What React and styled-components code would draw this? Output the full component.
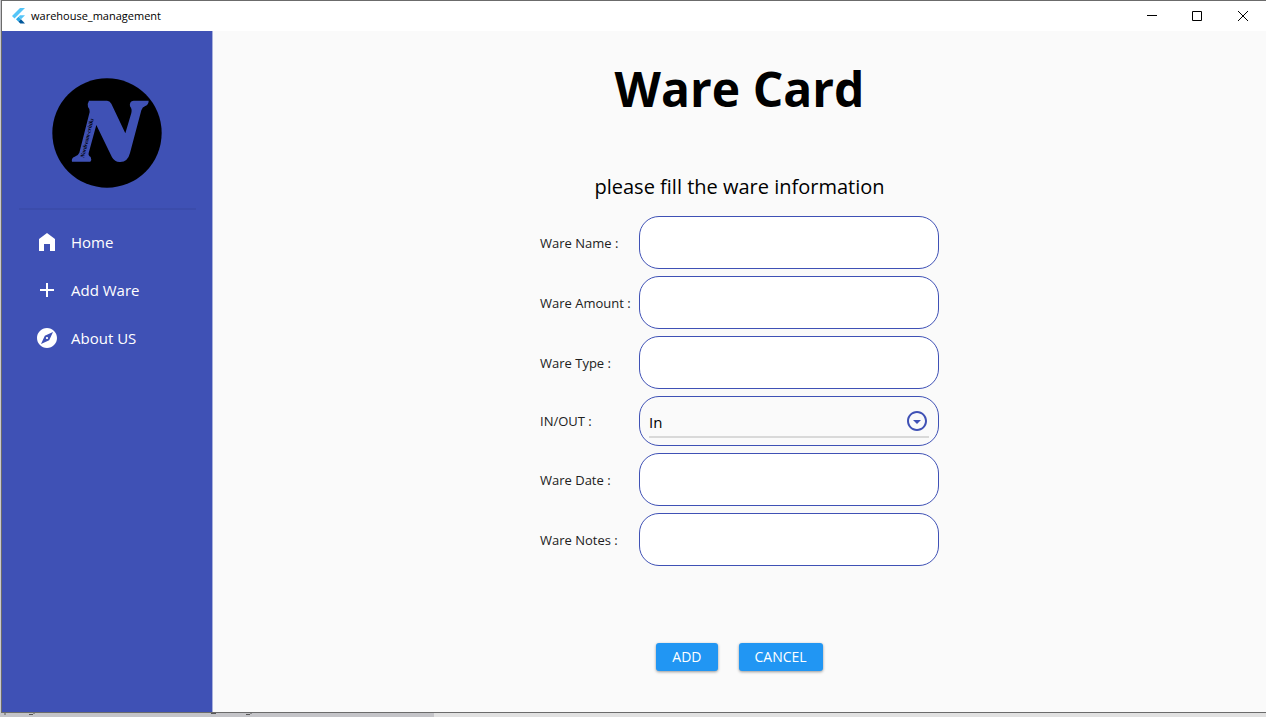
import React from "react";
import styled, { createGlobalStyle } from "styled-components";

const Global = createGlobalStyle`
  * { box-sizing: border-box; }
  body { margin: 0; }
  body, button, input, select { font-family: "Open Sans", "Noto Sans", sans-serif; }
`;

const indigo = "#3f51b5";

const Desktop = styled.div`
  min-height: 100vh;
  display: flex;
  flex-direction: column;
  background: #c9c9cd;
`;

const Window = styled.div`
  flex: 1;
  display: flex;
  flex-direction: column;
  border: solid #6b6b6b;
  border-width: 1px 0 1px 1px;
  margin-left: 1px;
  background: #fafafa;
`;

const TitleBar = styled.header`
  height: 30px;
  display: flex;
  align-items: center;
  padding: 0 0 0 8px;
  background: #fff;
`;

const AppTitle = styled.span`
  flex: 1;
  margin-left: 5px;
  font-size: 11px;
  line-height: 16px;
  color: #000;
`;

const WindowButton = styled.button`
  width: 46px;
  height: 30px;
  padding: 0;
  border: 0;
  display: grid;
  place-items: center;
  background: transparent;
`;

const Body = styled.div`
  flex: 1;
  display: flex;
`;

const Sidebar = styled.aside`
  width: 211px;
  flex: none;
  padding: 47px 16px 0 17px;
  background: ${indigo};
  border-right: 1px solid #a9b1dc;
`;

const LogoSlot = styled.div`
  display: flex;
  justify-content: center;
  padding-right: 2px;
`;

const Divider = styled.hr`
  height: 2px;
  margin: 20px 0 8px;
  border: 0;
  background: #3b4cab;
`;

const NavLink = styled.a`
  height: 48px;
  display: flex;
  align-items: center;
  gap: 12px;
  padding-left: 16px;
  color: #fff;
  font-size: 15px;
  line-height: 20px;
  text-decoration: none;
`;

const Main = styled.main`
  flex: 1;
  display: flex;
  flex-direction: column;
  align-items: center;
  padding-top: 24px;
`;

const Heading = styled.h1`
  margin: 0;
  font-size: 48px;
  line-height: 68px;
  font-weight: 700;
  color: #000;
`;

const Prompt = styled.p`
  margin: 49px 0 14px;
  font-size: 20px;
  line-height: 30px;
  color: #000;
`;

const Form = styled.form`
  display: flex;
  flex-direction: column;
  align-items: center;
`;

const Fields = styled.div`
  width: 399px;
  display: flex;
  flex-direction: column;
  gap: 7px;
`;

const Row = styled.div`
  display: flex;
  align-items: center;
`;

const Label = styled.label`
  width: 99px;
  flex: none;
  font-size: 13px;
  line-height: 18px;
  color: #212121;
  white-space: nowrap;
`;

const TextBox = styled.input`
  flex: 1;
  min-width: 0;
  height: 53px;
  padding: 0 16px;
  border: 1px solid ${indigo};
  border-radius: 20px;
  background: #fff;
  font-size: 15px;
`;

const SelectFrame = styled.div`
  flex: 1;
  height: 50px;
  display: grid;
  align-items: center;
  padding: 0 9px;
  border: 1px solid ${indigo};
  border-radius: 20px;

  > * { grid-area: 1 / 1; }
  > svg { justify-self: end; pointer-events: none; }
`;

const Select = styled.select`
  appearance: none;
  width: 100%;
  height: 32px;
  padding: 2px 0 0;
  border: 0;
  border-bottom: 2px solid #d9d9d9;
  border-radius: 0;
  align-self: end;
  margin-bottom: 7px;
  background: transparent;
  color: #000;
  font-size: 15px;
`;

const Actions = styled.div`
  display: flex;
  gap: 21px;
  margin: 77px 0 41px;
`;

const ActionButton = styled.button`
  height: 28px;
  padding: 0 16px;
  border: 0;
  border-radius: 3px;
  background: #2196f3;
  color: #fff;
  font-size: 14px;
  line-height: 20px;
  box-shadow: 0 1px 3px rgba(0, 0, 0, 0.4);
`;

const Backdrop = styled.div`
  height: 4px;
  display: flex;
  background: #e1e1e1;
`;

const FlutterMark = () => (
  <svg width="16" height="16" viewBox="0 0 16 16" aria-hidden="true">
    <path d="M10 0h5L4.500 10.500 2 8z" fill="#54c5f8" />
    <path d="M10 7.300h5L11 11.300 8.600 8.800z" fill="#54c5f8" />
    <path d="M6 11.300 8.500 8.800 11 11.300 8.500 13.800z" fill="#29a8e8" />
    <path d="M8.500 13.800 11 11.300 15 15.600H10.300z" fill="#01579b" />
  </svg>
);

const Logo = () => (
  <svg width="110" height="110" viewBox="37 37 330 330" role="img" aria-label="N logo">
    <circle cx="202" cy="202" r="164" fill="#000" />
    <path
      fill={indigo}
      d="M148 105H202Q210 105 215 114L257 203 275 142Q278 130 271 122Q268 107 282 105H327Q327 117 317 121Q308 124 305 134L271 262Q264 290 240 289Q225 289 217 275L170 178 147 262Q145 270 153 274Q157 283 152 288H97Q94 277 105 273Q115 271 119 261L150 139Q152 131 145 124Q143 112 148 105Z"
    />
    <text
      transform="translate(133 277) rotate(-76)"
      fontFamily="Liberation Serif, serif"
      fontSize="17"
      fontWeight="700"
      fontStyle="italic"
    >
      Nordream-critiks
    </text>
  </svg>
);

const icons = {
  home: "M12 3 4 9v12h5v-7h6v7h5V9z",
  add: "M19 13h-6v6h-2v-6H5v-2h6V5h2v6h6z",
  explore:
    "M12 10.900c-.61 0-1.100.49-1.100 1.100s.49 1.100 1.100 1.100c.61 0 1.100-.49 1.100-1.100s-.49-1.100-1.100-1.100zM12 2C6.480 2 2 6.480 2 12s4.480 10 10 10 10-4.480 10-10S17.520 2 12 2zm2.190 12.190L6 18l3.810-8.190L18 6l-3.810 8.190z",
  dropDown:
    "M12 4c4.410 0 8 3.590 8 8s-3.590 8-8 8-8-3.590-8-8 3.590-8 8-8m0-2C6.480 2 2 6.480 2 12s4.480 10 10 10 10-4.480 10-10S17.520 2 12 2zm0 13-4-4h8z",
};

const Icon = ({ name, color = "#fff" }) => (
  <svg width="24" height="24" viewBox="0 0 24 24" fill={color} aria-hidden="true">
    <path d={icons[name]} />
  </svg>
);

const WindowIcon = ({ d }) => (
  <svg width="11" height="11" viewBox="0 0 11 11" fill="none" stroke="#000" aria-hidden="true">
    <path d={d} />
  </svg>
);

const TextField = ({ id, label }) => (
  <Row>
    <Label htmlFor={id}>{label}</Label>
    <TextBox id={id} type="text" />
  </Row>
);

export default function App() {
  return (
    <Desktop>
      <Global />
      <Window>
        <TitleBar>
          <FlutterMark />
          <AppTitle>warehouse_management</AppTitle>
          <WindowButton aria-label="Minimize"><WindowIcon d="M1 4.500H11" /></WindowButton>
          <WindowButton aria-label="Maximize"><WindowIcon d="M.5.5H9.500V9.500H.5z" /></WindowButton>
          <WindowButton aria-label="Close"><WindowIcon d="M0 0 10 10M10 0 0 10" /></WindowButton>
        </TitleBar>
        <Body>
          <Sidebar>
            <LogoSlot><Logo /></LogoSlot>
            <Divider />
            <nav>
              <NavLink href="#home"><Icon name="home" />Home</NavLink>
              <NavLink href="#add"><Icon name="add" />Add Ware</NavLink>
              <NavLink href="#about"><Icon name="explore" />About US</NavLink>
            </nav>
          </Sidebar>
          <Main>
            <Heading>Ware Card</Heading>
            <Prompt>please fill the ware information</Prompt>
            <Form>
              <Fields>
                <TextField id="name" label="Ware Name :" />
                <TextField id="amount" label="Ware Amount :" />
                <TextField id="type" label="Ware Type :" />
                <Row>
                  <Label htmlFor="direction">IN/OUT :</Label>
                  <SelectFrame>
                    <Select id="direction" defaultValue="In">
                      <option>In</option>
                      <option>Out</option>
                    </Select>
                    <Icon name="dropDown" color={indigo} />
                  </SelectFrame>
                </Row>
                <TextField id="date" label="Ware Date :" />
                <TextField id="notes" label="Ware Notes :" />
              </Fields>
              <Actions>
                <ActionButton type="button">ADD</ActionButton>
                <ActionButton type="button">CANCEL</ActionButton>
              </Actions>
            </Form>
          </Main>
        </Body>
      </Window>
      <Backdrop>
        <svg width="434" height="4" viewBox="0 0 434 4" aria-hidden="true">
          <path d="M0 0H434V4H0z" fill="#c4c4c8" />
          <path d="M5 0V2M29 1.500H33M34 0V1M211 .5H216M246 1.500H250M251 0V1" stroke="#555" />
        </svg>
      </Backdrop>
    </Desktop>
  );
}
